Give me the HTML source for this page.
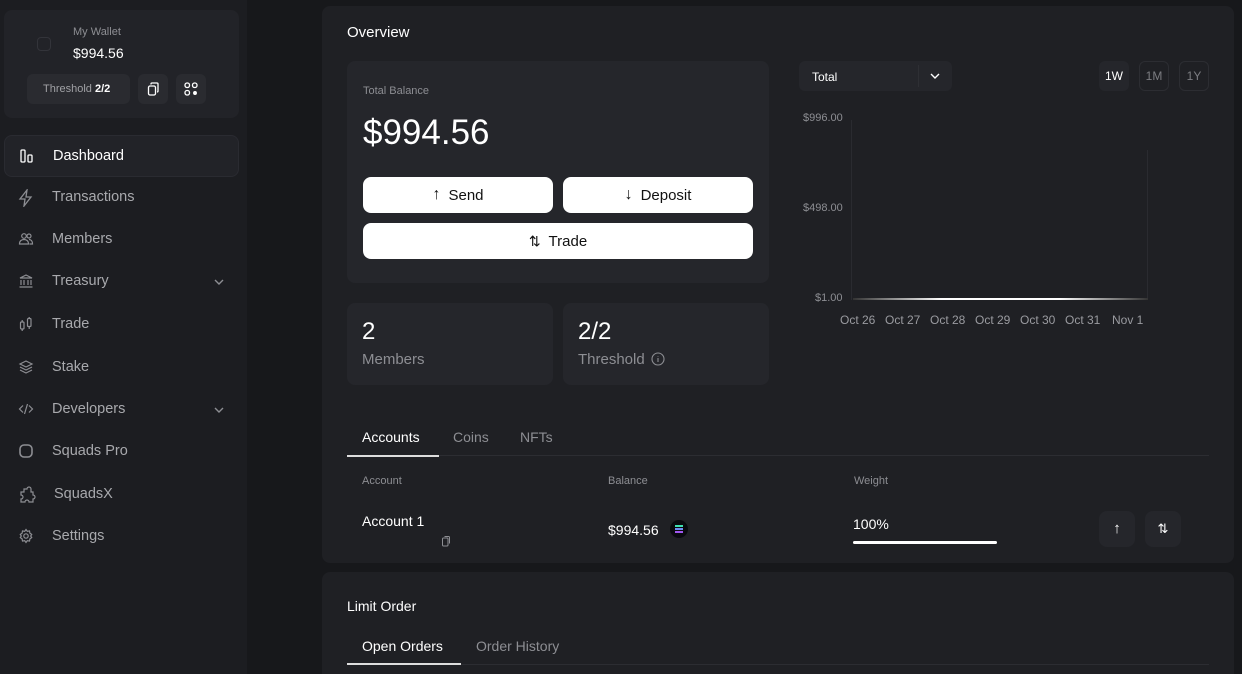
<!DOCTYPE html>
<html style="width:1242px;height:674px;overflow:hidden"><head><meta charset="utf-8"><style>
*{box-sizing:border-box;margin:0;padding:0}
body{width:1242px;height:674px;overflow:hidden;background:#17181b;font-family:"Liberation Sans",sans-serif;color:#fff;position:relative}
.abs{position:absolute}
.side{left:0;top:0;width:247px;height:674px;background:#1c1d21}
.wallet{left:4px;top:10px;width:235px;height:108px;background:#222328;border-radius:8px}
.nav{left:4px;width:235px;height:42px;border-radius:8px;font-size:14.5px;color:#a8a9ad}
.nav span{position:absolute;left:48px;top:12px}
.nav svg{position:absolute;left:14px;top:12px}
.nav svg.chev{left:auto;right:14px;top:15px}
.active{background:#222328;border:1px solid #2a2b31;color:#fff}
.panel{background:#1f2024;border-radius:8px}
.card{background:#25262b;border-radius:8px}
.btn{background:#fff;color:#111;border-radius:8px;font-size:15px;display:flex;align-items:center;justify-content:center;gap:8px}
.muted{color:#8d8e93}
</style></head><body>
<div class="abs side"></div>
<div class="abs wallet">
  <div class="abs" style="left:33px;top:27px;width:14px;height:14px;border:1px solid #33343a;border-radius:4px"></div>
  <div class="abs muted" style="left:69px;top:16px;font-size:11px">My Wallet</div>
  <div class="abs" style="left:69px;top:35px;font-size:14px">$994.56</div>
  <div class="abs" style="left:23px;top:64px;width:103px;height:30px;background:#2a2b30;border-radius:6px;font-size:11px;color:#a0a1a5;padding:9px 0 0 16px">Threshold <b style="color:#fff">2/2</b></div>
  <div class="abs" style="left:134px;top:64px;width:30px;height:30px;background:#2a2b30;border-radius:6px">
   <svg class="abs" style="left:8px;top:8px" width="14" height="14" viewBox="0 0 14 14" fill="none" stroke="#fff" stroke-width="1.3"><rect x="2.5" y="4" width="7" height="9" rx="1.5"/><path d="M5 2.5V2a1 1 0 0 1 1-1h5a1 1 0 0 1 1 1v7a1 1 0 0 1-1 1"/></svg></div>
  <div class="abs" style="left:172px;top:64px;width:30px;height:30px;background:#2a2b30;border-radius:6px">
   <svg class="abs" style="left:8px;top:8px" width="14" height="14" viewBox="0 0 14 14" fill="none" stroke="#fff" stroke-width="1.3"><rect x="1" y="1" width="4.5" height="4.5" rx="2"/><rect x="8.5" y="1" width="4.5" height="4.5" rx="2"/><rect x="1" y="8.5" width="4.5" height="4.5" rx="2"/><circle cx="11" cy="11" r="1.3" fill="#fff"/></svg></div>
</div>

<div class="abs nav active" style="top:135px"><svg width="16" height="16" viewBox="0 0 16 16" fill="none" stroke="#fff" stroke-width="1.3"><rect x="2" y="2" width="4" height="12" rx="1"/><rect x="9" y="7" width="4" height="7" rx="1"/></svg><span>Dashboard</span></div>
<div class="abs nav" style="top:177px"><svg width="16" height="18" viewBox="0 0 16 18" fill="none" stroke="#8d8e93" stroke-width="1.3"><path d="M9 1L2 10h5l-1 7 7-9H8z"/></svg><span>Transactions</span></div>
<div class="abs nav" style="top:219px"><svg width="16" height="16" viewBox="0 0 16 16" fill="none" stroke="#8d8e93" stroke-width="1.2"><circle cx="6" cy="5" r="2.3"/><circle cx="11" cy="5" r="2"/><path d="M1.5 13c0-3 2-4.5 4.5-4.5S10.5 10 10.5 13zM11 8.5c2 0 3.5 1.5 3.5 4.5h-3"/></svg><span>Members</span></div>
<div class="abs nav" style="top:261px"><svg width="16" height="16" viewBox="0 0 16 16" fill="none" stroke="#8d8e93" stroke-width="1.2"><path d="M2 5l6-3 6 3zM3 7v5M6 7v5M10 7v5M13 7v5M1.5 14h13"/></svg><span>Treasury</span><svg class="chev" width="12" height="12" viewBox="0 0 12 12" fill="none" stroke="#8d8e93" stroke-width="1.4"><path d="M2 4l4 4 4-4"/></svg></div>
<div class="abs nav" style="top:304px"><svg width="16" height="16" viewBox="0 0 16 16" fill="none" stroke="#8d8e93" stroke-width="1.2"><rect x="2.5" y="6" width="3.5" height="7" rx="1"/><path d="M4.2 4v2M4.2 13v2"/><rect x="9.5" y="2.5" width="3.5" height="8" rx="1"/><path d="M11.2 1v1.5M11.2 10.5V13"/></svg><span>Trade</span></div>
<div class="abs nav" style="top:347px"><svg width="16" height="16" viewBox="0 0 16 16" fill="none" stroke="#8d8e93" stroke-width="1.2"><path d="M8 2l6 3-6 3-6-3zM2 8l6 3 6-3M2 11l6 3 6-3"/></svg><span>Stake</span></div>
<div class="abs nav" style="top:389px"><svg width="16" height="16" viewBox="0 0 16 16" fill="none" stroke="#8d8e93" stroke-width="1.2"><path d="M5 4.5L1.5 8 5 11.5M11 4.5L14.5 8 11 11.5M9.5 3l-3 10"/></svg><span>Developers</span><svg class="chev" width="12" height="12" viewBox="0 0 12 12" fill="none" stroke="#8d8e93" stroke-width="1.4"><path d="M2 4l4 4 4-4"/></svg></div>
<div class="abs nav" style="top:431px"><svg width="16" height="16" viewBox="0 0 16 16" fill="none" stroke="#8d8e93" stroke-width="1.6"><rect x="2" y="2" width="12" height="12" rx="4"/></svg><span>Squads Pro</span></div>
<div class="abs nav" style="top:474px"><svg width="18" height="18" viewBox="0 0 18 18" fill="none" stroke="#8d8e93" stroke-width="1.2"><path d="M6 3h3a2 2 0 0 1 4 0v3h2v3a2 2 0 0 1 0 4v3h-4a2 2 0 0 0-4 0H3v-3a2 2 0 0 0 0-4V6h3z"/></svg><span style="left:50px">SquadsX</span></div>
<div class="abs nav" style="top:516px"><svg width="16" height="16" viewBox="0 0 16 16" fill="none" stroke="#8d8e93" stroke-width="1.2"><circle cx="8" cy="8" r="2.2"/><path d="M8 1.5l1.3 1.8 2.2-.4.4 2.2 1.8 1.3-1 1.6 1 1.6-1.8 1.3-.4 2.2-2.2-.4L8 14.5l-1.3-1.8-2.2.4-.4-2.2-1.8-1.3 1-1.6-1-1.6 1.8-1.3.4-2.2 2.2.4z"/></svg><span>Settings</span></div>

<div class="abs panel" style="left:322px;top:6px;width:912px;height:557px"></div>
<div class="abs" style="left:347px;top:24px;font-size:15px">Overview</div>
<div class="abs card" style="left:347px;top:61px;width:422px;height:222px"></div>
<div class="abs muted" style="left:363px;top:85px;font-size:11px">Total Balance</div>
<div class="abs" style="left:363px;top:113px;font-size:35px">$994.56</div>
<div class="abs btn" style="left:363px;top:177px;width:190px;height:36px"><span style="font-size:16px">↑</span>Send</div>
<div class="abs btn" style="left:563px;top:177px;width:190px;height:36px"><span style="font-size:16px">↓</span>Deposit</div>
<div class="abs btn" style="left:363px;top:223px;width:390px;height:36px"><span style="font-size:14px">⇅</span>Trade</div>
<div class="abs card" style="left:347px;top:303px;width:206px;height:82px"></div>
<div class="abs card" style="left:563px;top:303px;width:206px;height:82px"></div>
<div class="abs" style="left:362px;top:318px;font-size:24px">2</div>
<div class="abs muted" style="left:362px;top:351px;font-size:15px">Members</div>
<div class="abs" style="left:578px;top:318px;font-size:24px">2/2</div>
<div class="abs muted" style="left:578px;top:351px;font-size:15px">Threshold</div>
<svg class="abs" style="left:651px;top:352px" width="14" height="14" viewBox="0 0 14 14" fill="none" stroke="#8d8e93" stroke-width="1.1"><circle cx="7" cy="7" r="6"/><path d="M7 6v4M7 4v.5"/></svg>

<div class="abs" style="left:799px;top:61px;width:153px;height:30px;background:#25262b;border-radius:6px;font-size:12px;padding:9px 0 0 13px">Total</div>
<div class="abs" style="left:918px;top:65px;width:1px;height:22px;background:#2e2f34"></div>
<svg class="abs" style="left:929px;top:71px" width="12" height="10" viewBox="0 0 12 10" fill="none" stroke="#fff" stroke-width="1.4"><path d="M2 3l4 4 4-4"/></svg>
<div class="abs" style="left:1099px;top:61px;width:30px;height:30px;background:#25262b;border-radius:6px;font-size:12px;text-align:center;line-height:30px">1W</div>
<div class="abs" style="left:1139px;top:61px;width:30px;height:30px;border:1px solid #2c2d32;border-radius:6px;font-size:12px;text-align:center;line-height:28px;color:#7c7d82">1M</div>
<div class="abs" style="left:1179px;top:61px;width:30px;height:30px;border:1px solid #2c2d32;border-radius:6px;font-size:12px;text-align:center;line-height:28px;color:#7c7d82">1Y</div>
<div class="abs muted" style="left:803px;top:112px;font-size:11px">$996.00</div>
<div class="abs muted" style="left:803px;top:202px;font-size:11px">$498.00</div>
<div class="abs muted" style="left:815px;top:292px;font-size:11px">$1.00</div>
<div class="abs" style="left:851px;top:120px;width:1px;height:180px;background:#2a2b30"></div>
<div class="abs" style="left:1147px;top:150px;width:1px;height:150px;background:#2a2b30"></div>
<div class="abs" style="left:853px;top:298px;width:295px;height:2px;background:linear-gradient(90deg,#333,#fff 30%,#fff 70%,#333)"></div>
<div class="abs" style="left:840px;top:313px;font-size:12px;color:#9a9ba0">Oct 26</div>
<div class="abs" style="left:885px;top:313px;font-size:12px;color:#9a9ba0">Oct 27</div>
<div class="abs" style="left:930px;top:313px;font-size:12px;color:#9a9ba0">Oct 28</div>
<div class="abs" style="left:975px;top:313px;font-size:12px;color:#9a9ba0">Oct 29</div>
<div class="abs" style="left:1020px;top:313px;font-size:12px;color:#9a9ba0">Oct 30</div>
<div class="abs" style="left:1065px;top:313px;font-size:12px;color:#9a9ba0">Oct 31</div>
<div class="abs" style="left:1112px;top:313px;font-size:12px;color:#9a9ba0">Nov 1</div>

<div class="abs" style="left:362px;top:429px;font-size:14px">Accounts</div>
<div class="abs muted" style="left:453px;top:429px;font-size:14px">Coins</div>
<div class="abs muted" style="left:520px;top:429px;font-size:14px">NFTs</div>
<div class="abs" style="left:347px;top:455px;width:862px;height:1px;background:#2c2d32"></div>
<div class="abs" style="left:347px;top:455px;width:92px;height:2px;background:#ddd"></div>
<div class="abs muted" style="left:362px;top:475px;font-size:11px">Account</div>
<div class="abs muted" style="left:608px;top:475px;font-size:11px">Balance</div>
<div class="abs muted" style="left:854px;top:475px;font-size:11px">Weight</div>
<div class="abs" style="left:362px;top:513px;font-size:14px">Account 1</div>
<svg class="abs" style="left:441px;top:535px" width="10" height="12" viewBox="0 0 10 12" fill="none" stroke="#8d8e93" stroke-width="1"><rect x="1.5" y="3" width="5.5" height="8" rx="1"/><path d="M3.5 1.5h4a1 1 0 0 1 1 1v6"/></svg>
<div class="abs" style="left:608px;top:522px;font-size:14px">$994.56</div>
<div class="abs" style="left:670px;top:520px;width:18px;height:18px;border-radius:50%;background:#0a0a0f"><div class="abs" style="left:5px;top:5px;width:8px;height:2px;background:#3fe0b0"></div><div class="abs" style="left:5px;top:8px;width:8px;height:2px;background:#6d8cf0"></div><div class="abs" style="left:5px;top:11px;width:8px;height:2px;background:#a057f0"></div></div>
<div class="abs" style="left:853px;top:516px;font-size:14px">100%</div>
<div class="abs" style="left:853px;top:541px;width:144px;height:3px;background:#fff;border-radius:2px"></div>
<div class="abs" style="left:1099px;top:511px;width:36px;height:36px;background:#25262b;border-radius:8px;text-align:center;line-height:36px;font-size:15px">↑</div>
<div class="abs" style="left:1145px;top:511px;width:36px;height:36px;background:#25262b;border-radius:8px;text-align:center;line-height:36px;font-size:13px">⇅</div>

<div class="abs panel" style="left:322px;top:572px;width:912px;height:102px;border-radius:8px 8px 0 0"></div>
<div class="abs" style="left:347px;top:598px;font-size:14px">Limit Order</div>
<div class="abs" style="left:362px;top:638px;font-size:14px">Open Orders</div>
<div class="abs muted" style="left:476px;top:638px;font-size:14px">Order History</div>
<div class="abs" style="left:347px;top:664px;width:862px;height:1px;background:#2c2d32"></div>
<div class="abs" style="left:347px;top:663px;width:114px;height:2px;background:#ddd"></div>
</body></html>
